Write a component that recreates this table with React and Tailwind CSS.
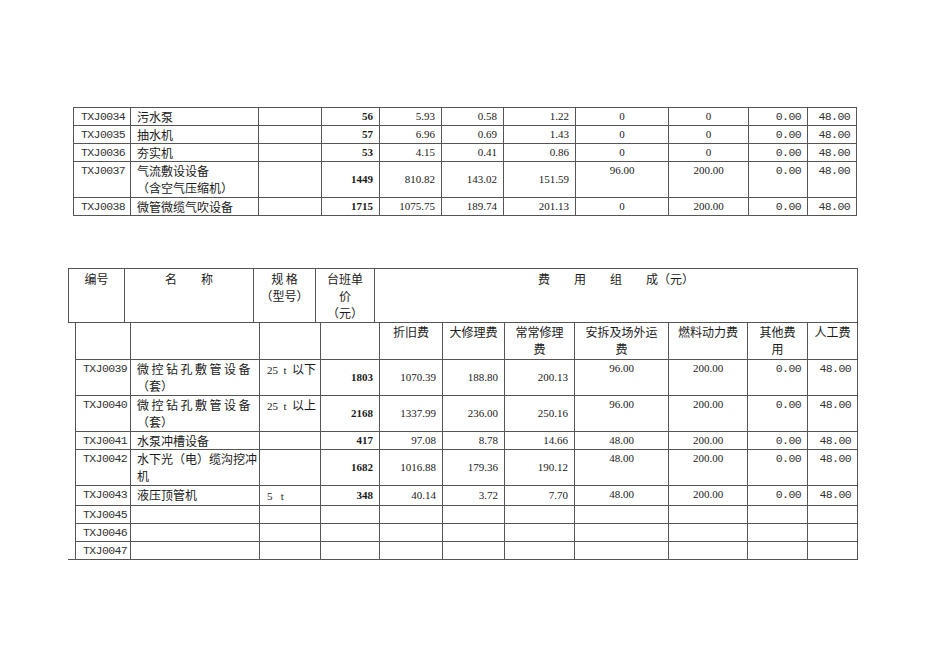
import React from 'react';

const cell = 'border border-[#555] p-0 leading-[17px] overflow-hidden whitespace-nowrap';
const code = 'font-["Liberation_Mono",monospace] text-[11.5px] tracking-[-0.6px] text-left pl-[7px] align-top text-[#333]';
const name = 'font-["Noto_Sans_CJK_SC",sans-serif] text-[12px] text-left pl-[6px] align-top';
const spec = 'font-["Liberation_Serif","Noto_Sans_CJK_SC",serif] text-[11px] text-left pl-[7px] align-top';
const price = 'font-["Liberation_Serif",serif] font-bold text-[11px] text-right pr-[6px] align-middle';
const num = 'font-["Liberation_Serif",serif] text-[11px] text-right pr-[6px] align-middle';
const mid = 'font-["Liberation_Serif",serif] text-[11px] text-center align-top';
const mono = 'font-["Liberation_Mono",monospace] text-[11.5px] tracking-[-0.6px] text-right pr-[6px] align-top text-[#333]';

const topRows = [
  ['TXJ0034', ['污水泵'], '', '56', '5.93', '0.58', '1.22', '0', '0'],
  ['TXJ0035', ['抽水机'], '', '57', '6.96', '0.69', '1.43', '0', '0'],
  ['TXJ0036', ['夯实机'], '', '53', '4.15', '0.41', '0.86', '0', '0'],
  ['TXJ0037', ['气流敷设设备', '（含空气压缩机）'], '', '1449', '810.82', '143.02', '151.59', '96.00', '200.00'],
  ['TXJ0038', ['微管微缆气吹设备'], '', '1715', '1075.75', '189.74', '201.13', '0', '200.00'],
];

const wide = (t) => <span className="tracking-[2.5px]">{t}</span>;

const lowRows = [
  ['TXJ0039', [wide('微控钻孔敷管设备'), '（套）'], ['25\u00a0\u00a0t\u00a0\u00a0', '以下'], '1803', '1070.39', '188.80', '200.13', '96.00', '200.00'],
  ['TXJ0040', [wide('微控钻孔敷管设备'), '（套）'], ['25\u00a0\u00a0t\u00a0\u00a0', '以上'], '2168', '1337.99', '236.00', '250.16', '96.00', '200.00'],
  ['TXJ0041', ['水泵冲槽设备'], null, '417', '97.08', '8.78', '14.66', '48.00', '200.00'],
  ['TXJ0042', ['水下光（电）缆沟挖冲', '机'], null, '1682', '1016.88', '179.36', '190.12', '48.00', '200.00'],
  ['TXJ0043', ['液压顶管机'], ['5\u00a0\u00a0\u00a0t', ''], '348', '40.14', '3.72', '7.70', '48.00', '200.00'],
];

const Lines = ({ lines }) =>
  lines.map((l, i) => (
    <div key={i}>{l}</div>
  ));

const DataRow = ({ r }) => {
  const tall = r[1].length > 1;
  const h = tall ? 'h-[36px]' : 'h-[18px]';
  return (
    <tr>
      <td className={`${cell} ${code} ${h}`}>{r[0]}</td>
      <td className={`${cell} ${name}`}><Lines lines={r[1]} /></td>
      <td className={`${cell} ${spec}`}>
        {r[2] && (
          <>
            {r[2][0]}
            <span className="font-['Noto_Sans_CJK_SC',sans-serif] text-[12px]">{r[2][1]}</span>
          </>
        )}
      </td>
      <td className={`${cell} ${price}`}>{r[3]}</td>
      <td className={`${cell} ${num}`}>{r[4]}</td>
      <td className={`${cell} ${num}`}>{r[5]}</td>
      <td className={`${cell} ${num}`}>{r[6]}</td>
      <td className={`${cell} ${mid}`}>{r[7]}</td>
      <td className={`${cell} ${mid}`}>{r[8]}</td>
      <td className={`${cell} ${mono}`}>0.00</td>
      <td className={`${cell} ${mono} pr-[5px]`}>48.00</td>
    </tr>
  );
};

const Cols = ({ widths }) => (
  <colgroup>
    {widths.map((w, i) => (
      <col key={i} style={{ width: w }} />
    ))}
  </colgroup>
);

const hd = 'border border-[#555] p-0 leading-[17px] align-top text-center font-["Noto_Sans_CJK_SC",sans-serif] text-[12px] whitespace-nowrap';

export default function App() {
  return (
    <div className="bg-white w-[950px] h-[672px] text-[#1a1a1a] pt-[107px] pl-[68px]">
      <table className="ml-[5px] border-collapse table-fixed w-[783px]">
        <Cols widths={[57, 128, 63, 58, 62, 62, 72, 93, 80, 59, 49]} />
        <tbody>
          {topRows.map((r) => (
            <DataRow key={r[0]} r={r} />
          ))}
        </tbody>
      </table>

      <div className="mt-[52px]">
        <table className="border-collapse table-fixed w-[789px]">
          <Cols widths={[56, 129, 62, 59, 483]} />
          <tbody>
            <tr>
              <td className={`${hd} h-[54px] pt-[1px]`}>编号</td>
              <td className={`${hd} pt-[1px]`}>名　　称</td>
              <td className={`${hd} pt-[1px]`}>
                <div>规 格</div>
                <div>（型号）</div>
              </td>
              <td className={`${hd} pt-[1px]`}>
                <div>台班单</div>
                <div>价</div>
                <div>（元）</div>
              </td>
              <td className={`${hd} pt-[1px]`}>费　　用　　组　　成（元）</td>
            </tr>
          </tbody>
        </table>

        <table className="ml-[7px] border-collapse table-fixed w-[782px]">
          <Cols widths={[55, 129, 61, 59, 63, 62, 70, 94, 79, 60, 50]} />
          <tbody>
            <tr>
              <td className={`${hd} border-t-0 h-[36px]`}></td>
              <td className={`${hd} border-t-0`}></td>
              <td className={`${hd} border-t-0`}></td>
              <td className={`${hd} border-t-0`}></td>
              <td className={`${hd} border-t-0`}>折旧费</td>
              <td className={`${hd} border-t-0`}>大修理费</td>
              <td className={`${hd} border-t-0`}>
                <div>常常修理</div>
                <div>费</div>
              </td>
              <td className={`${hd} border-t-0`}>
                <div>安拆及场外运</div>
                <div>费</div>
              </td>
              <td className={`${hd} border-t-0`}>燃料动力费</td>
              <td className={`${hd} border-t-0`}>
                <div>其他费</div>
                <div>用</div>
              </td>
              <td className={`${hd} border-t-0`}>人工费</td>
            </tr>
            {lowRows.map((r) => (
              <DataRow key={r[0]} r={r} />
            ))}
            {['TXJ0045', 'TXJ0046', 'TXJ0047'].map((c) => (
              <tr key={c}>
                <td className={`${cell} ${code} h-[18px]`}>{c}</td>
                {Array.from({ length: 10 }).map((_, i) => (
                  <td key={i} className={cell}></td>
                ))}
              </tr>
            ))}
          </tbody>
        </table>
        <div className="w-[789px] border-t border-[#555] -mt-px"></div>
      </div>
    </div>
  );
}
